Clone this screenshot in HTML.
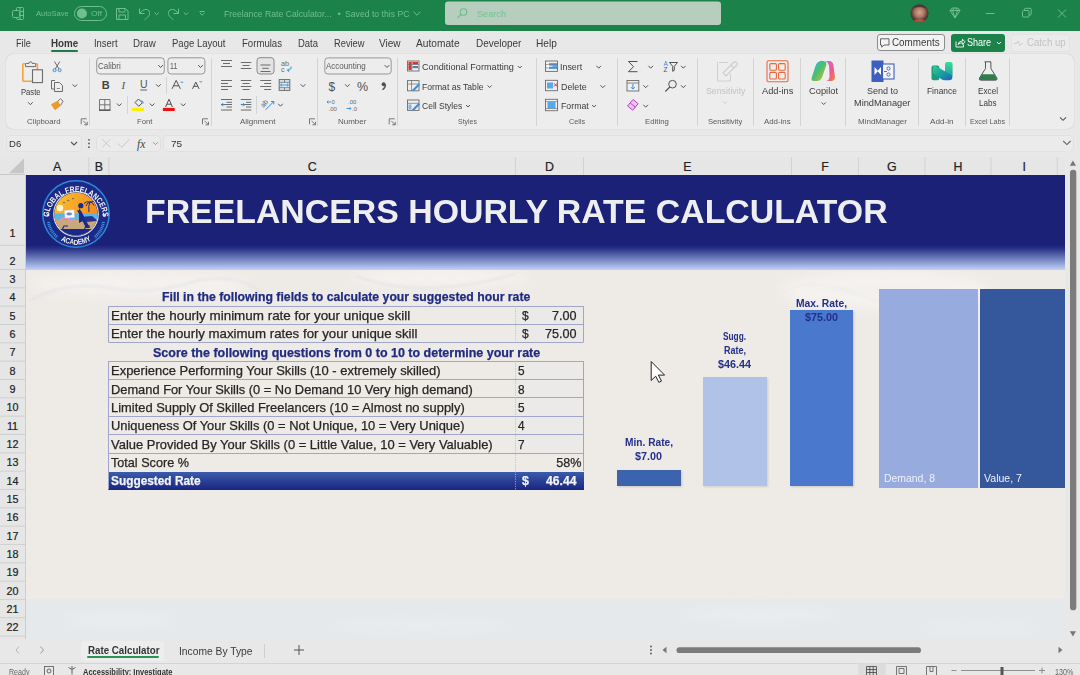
<!DOCTYPE html>
<html><head><meta charset="utf-8">
<style>
*{margin:0;padding:0;box-sizing:border-box}
html,body{width:1080px;height:675px;overflow:hidden;background:#e8e8e8;font-family:"Liberation Sans",sans-serif;position:relative}
.a{position:absolute}
.t{position:absolute;white-space:nowrap;line-height:1}
/* title bar */
#tb{left:0;top:0;width:1080px;height:31px;background:#1b8249}
/* tabs */
#tabs{left:0;top:31px;width:1080px;height:24px;background:#e8e8e8}
.tab{position:absolute;top:37px;font-size:11.5px;color:#3b3b3b}
/* ribbon */
#rib{left:6px;top:54px;width:1068px;height:75px;background:#ededed;border-radius:7px;box-shadow:0 0 1px rgba(0,0,0,.25)}
.sep{position:absolute;top:60px;width:1px;height:66px;background:#d6d6d6}
.gl{position:absolute;top:116px;font-size:9px;color:#555;white-space:nowrap;line-height:1}
.rt{position:absolute;font-size:10px;color:#333;white-space:nowrap;line-height:1}
/* formula bar */
.fb{position:absolute;background:#f0f0f0;border-radius:4px}
/* sheet */
#colh{left:0;top:151px;width:1065px;height:24px;background:#e6e6e6}
.ch{position:absolute;top:160px;font-size:12px;color:#222;line-height:1}
.cs{position:absolute;top:156px;width:1px;height:19px;background:#cfcfcf}
#rowh{left:0;top:175px;width:25px;height:464px;background:#e6e6e6;border-right:1px solid #c8c8c8}
.rh{position:absolute;left:0;width:25px;text-align:center;font-size:13px;color:#222;line-height:1}
#sheet{left:25px;top:175px;width:1040px;height:464px;background:#ece8e4;overflow:hidden}
</style></head><body>
<div id="tb" class="a"></div>
<div id="tabs" class="a"></div>
<!-- title bar content -->
<svg class="a" style="left:0;top:0" width="1080" height="31" viewBox="0 0 1080 31">
 <g fill="none" stroke="#6fbf8f" stroke-width="1">
  <!-- excel icon -->
  <rect x="16.5" y="7.5" width="7" height="12" rx="1"></rect>
  <line x1="16.5" y1="11.5" x2="23.5" y2="11.5"></line><line x1="16.5" y1="15.5" x2="23.5" y2="15.5"></line><line x1="20" y1="7.5" x2="20" y2="19.5"></line>
  <rect x="12.5" y="10.5" width="7" height="7" rx="1" fill="#1b8249"></rect>
  <!-- toggle -->
  <rect x="74.5" y="6.5" width="32" height="14" rx="7"></rect>
  <!-- save -->
  <path d="M116.5 8.5h9l2.5 2.5v8.5h-11.5z M119 8.5v3.5h6v-3.5 M119 19.5v-4.5h6.5v4.5"></path>
  <!-- undo -->
  <path d="M139.5 8.5v5h5 M140 13.5C142.5 8.5 149 8 149.5 12.5C150 15.5 147.5 17.5 144.5 19.8"></path>
  <path d="M154.5 12.5l2.2 2.2l2.2-2.2"></path>
  <!-- redo -->
  <path d="M178.5 8.5v5h-5 M178 13.5C175.5 8.5 169 8 168.5 12.5C168 15.5 170.5 17.5 173.5 19.8"></path>
  <path d="M183.8 12.5l2.2 2.2l2.2-2.2"></path>
  <!-- customize -->
  <path d="M199.5 11.5h5 M200 13l2.2 2.2l2.2-2.2"></path>
  <!-- title chevron -->
  <path d="M413.6 11.8l3.4 3.4l3.4-3.4"></path>
  <!-- search magnifier -->
  <circle cx="463.5" cy="12" r="3.3" stroke="#7ec79a"></circle><path d="M461 14.5l-3.3 3.3" stroke="#7ec79a"></path>
  <!-- diamond -->
  <path d="M950 10.5l2.2-2.5h5.6l2.2 2.5l-5 7.5z M950 10.5h10 M952.5 10.5l2.5 7.5l2.5-7.5 M954 8l-1.5 2.5 M956 8l1.5 2.5"></path>
  <!-- min -->
  <path d="M986 13.5h8.5"></path>
  <!-- restore -->
  <rect x="1022.5" y="10.5" width="6.5" height="6.5" rx="1"></rect><path d="M1024.5 10.5v-1.2a1 1 0 0 1 1-1h4.7a1 1 0 0 1 1 1v4.7a1 1 0 0 1-1 1h-1.2"></path>
  <!-- close -->
  <path d="M1058 9.5l8 8M1066 9.5l-8 8"></path>
 </g>
 <circle cx="81.9" cy="13.5" r="5" fill="#6fbf8f"></circle>
 <rect x="445" y="1.5" width="276" height="23.5" rx="3" fill="#b7cdbd"></rect>
 <circle cx="463.5" cy="12" r="3.3" fill="none" stroke="#6abd88" stroke-width="1.1"></circle><path d="M461 14.5l-3.3 3.3" stroke="#6abd88" stroke-width="1.1"></path>
 <defs><radialGradient id="av" cx=".5" cy=".45" r=".55"><stop offset="0" stop-color="#d9a48c"></stop><stop offset=".45" stop-color="#b07a66"></stop><stop offset=".8" stop-color="#5a4038"></stop><stop offset="1" stop-color="#3a2a28"></stop></radialGradient><clipPath id="avc"><circle cx="919.5" cy="13.3" r="9"></circle></clipPath></defs><circle cx="919.5" cy="13.3" r="9" fill="url(#av)"></circle><g clip-path="url(#avc)"><path d="M910 24q4-5 9.5-5t9.5 5z" fill="#c8463a"></path><path d="M911 9q3-6 9-6t8 7q-3-3-8-3t-9 2z" fill="#4a3a36"></path></g>
</svg>
<div class="t" style="left: 36px; top: 10.1px; font-size: 8px; color: rgb(111, 191, 143); --w: 32.75px; transform: scaleX(0.9437); transform-origin: 0px 0px;">AutoSave</div>
<div class="t" style="left: 90.9px; top: 10.1px; font-size: 8px; color: rgb(111, 191, 143); --w: 11px; transform: scaleX(1.0445); transform-origin: 0px 0px;">Off</div>
<div class="t" style="left: 224.3px; top: 9.9px; font-size: 9px; color: rgb(111, 191, 143); --w: 107.6px; transform: scaleX(0.9645); transform-origin: 0px 0px;">Freelance Rate Calculator...</div>
<div class="t" style="left:337.5px;top:9.9px;font-size:9px;color:#6fbf8f">•</div>
<div class="t" style="left: 344.5px; top: 9.9px; font-size: 9px; color: rgb(111, 191, 143); --w: 64.5px; transform: scaleX(0.962); transform-origin: 0px 0px;">Saved to this PC</div>
<div class="t" style="left: 476.5px; top: 9.4px; font-size: 9.5px; color: rgb(114, 194, 147); --w: 29px; transform: scaleX(0.9632); transform-origin: 0px 0px;">Search</div>
<div id="rib" class="a"></div>

<!--RIB-->
<div class="t" style="left: 15.8px; top: 38.41px; font-size: 10.5px; color: rgb(58, 58, 58); --w: 14.80px; transform: scaleX(0.8746); transform-origin: 0px 0px;">File</div>
<div class="t" style="left: 50.6px; top: 38.41px; font-size: 10.5px; color: rgb(58, 58, 58); --w: 27.20px; font-weight: bold; transform: scaleX(0.9319); transform-origin: 0px 0px;">Home</div>
<div class="t" style="left: 93.6px; top: 38.41px; font-size: 10.5px; color: rgb(58, 58, 58); --w: 23.60px; transform: scaleX(0.8985); transform-origin: 0px 0px;">Insert</div>
<div class="t" style="left: 133.3px; top: 38.41px; font-size: 10.5px; color: rgb(58, 58, 58); --w: 22.70px; transform: scaleX(0.9259); transform-origin: 0px 0px;">Draw</div>
<div class="t" style="left: 172px; top: 38.41px; font-size: 10.5px; color: rgb(58, 58, 58); --w: 53.50px; transform: scaleX(0.9073); transform-origin: 0px 0px;">Page Layout</div>
<div class="t" style="left: 242px; top: 38.41px; font-size: 10.5px; color: rgb(58, 58, 58); --w: 40.00px; transform: scaleX(0.914); transform-origin: 0px 0px;">Formulas</div>
<div class="t" style="left: 297.8px; top: 38.41px; font-size: 10.5px; color: rgb(58, 58, 58); --w: 20.00px; transform: scaleX(0.9014); transform-origin: 0px 0px;">Data</div>
<div class="t" style="left: 333.9px; top: 38.41px; font-size: 10.5px; color: rgb(58, 58, 58); --w: 30.50px; transform: scaleX(0.8857); transform-origin: 0px 0px;">Review</div>
<div class="t" style="left: 379.4px; top: 38.41px; font-size: 10.5px; color: rgb(58, 58, 58); --w: 21.60px; transform: scaleX(0.9567); transform-origin: 0px 0px;">View</div>
<div class="t" style="left: 416.4px; top: 38.41px; font-size: 10.5px; color: rgb(58, 58, 58); --w: 43.60px; transform: scaleX(0.9699); transform-origin: 0px 0px;">Automate</div>
<div class="t" style="left: 476px; top: 38.41px; font-size: 10.5px; color: rgb(58, 58, 58); --w: 45.40px; transform: scaleX(0.9483); transform-origin: 0px 0px;">Developer</div>
<div class="t" style="left: 536.4px; top: 38.41px; font-size: 10.5px; color: rgb(58, 58, 58); --w: 20.80px; transform: scaleX(0.9625); transform-origin: 0px 0px;">Help</div>
<div class="a" style="left:50.5px;top:50px;width:27.5px;height:2px;border-radius:1px;background:#1f7a46"></div>
<div class="a" style="left:876.5px;top:34.2px;width:68.5px;height:17.2px;border:1px solid #8c8c8c;border-radius:3px;background:#f3f3f3"></div>
<div class="t" style="left: 892.2px; top: 37.39px; font-size: 11px; color: rgb(58, 58, 58); --w: 47.60px; transform: scaleX(0.8949); transform-origin: 0px 0px;">Comments</div>
<div class="a" style="left:951.2px;top:33.7px;width:53.4px;height:17.9px;border-radius:3px;background:#1b8249"></div>
<div class="t" style="left: 967.3px; top: 37.39px; font-size: 11px; color: rgb(255, 255, 255); --w: 24.10px; transform: scaleX(0.8209); transform-origin: 0px 0px;">Share</div>
<div class="a" style="left:1010.7px;top:33.7px;width:59px;height:17.9px;border-radius:3px;background:#ebebeb;border:1px solid #e3e3e3"></div>
<div class="t" style="left: 1026.6px; top: 37.39px; font-size: 11px; color: rgb(195, 195, 195); --w: 38.70px; transform: scaleX(0.8789); transform-origin: 0px 0px;">Catch up</div>
<div class="t" style="left: 26.6px; top: 117.77px; font-size: 7.6px; color: rgb(90, 90, 90); --w: 33.50px; transform: scaleX(1.0303); transform-origin: 0px 0px;">Clipboard</div>
<div class="t" style="left: 136.7px; top: 117.77px; font-size: 7.6px; color: rgb(90, 90, 90); --w: 15.30px; transform: scaleX(1.0064); transform-origin: 0px 0px;">Font</div>
<div class="t" style="left: 240.4px; top: 117.77px; font-size: 7.6px; color: rgb(90, 90, 90); --w: 35.50px; transform: scaleX(1.0509); transform-origin: 0px 0px;">Alignment</div>
<div class="t" style="left: 337.6px; top: 117.77px; font-size: 7.6px; color: rgb(90, 90, 90); --w: 28.30px; transform: scaleX(1.0475); transform-origin: 0px 0px;">Number</div>
<div class="t" style="left: 457.8px; top: 117.77px; font-size: 7.6px; color: rgb(90, 90, 90); --w: 18.90px; transform: scaleX(0.9136); transform-origin: 0px 0px;">Styles</div>
<div class="t" style="left: 568.7px; top: 117.77px; font-size: 7.6px; color: rgb(90, 90, 90); --w: 16.10px; transform: scaleX(0.9532); transform-origin: 0px 0px;">Cells</div>
<div class="t" style="left: 645.2px; top: 117.77px; font-size: 7.6px; color: rgb(90, 90, 90); --w: 23.80px; transform: scaleX(1.0243); transform-origin: 0px 0px;">Editing</div>
<div class="t" style="left: 708.3px; top: 117.77px; font-size: 7.6px; color: rgb(90, 90, 90); --w: 34.30px; transform: scaleX(1.0033); transform-origin: 0px 0px;">Sensitivity</div>
<div class="t" style="left: 764.1px; top: 117.77px; font-size: 7.6px; color: rgb(90, 90, 90); --w: 26.60px; transform: scaleX(1.033); transform-origin: 0px 0px;">Add-ins</div>
<div class="t" style="left: 858px; top: 117.77px; font-size: 7.6px; color: rgb(90, 90, 90); --w: 49.00px; transform: scaleX(1.0552); transform-origin: 0px 0px;">MindManager</div>
<div class="t" style="left: 930.2px; top: 117.77px; font-size: 7.6px; color: rgb(90, 90, 90); --w: 23.50px; transform: scaleX(1.0705); transform-origin: 0px 0px;">Add-in</div>
<div class="t" style="left: 970px; top: 117.77px; font-size: 7.6px; color: rgb(90, 90, 90); --w: 35.00px; transform: scaleX(0.942); transform-origin: 0px 0px;">Excel Labs</div>
<div class="t" style="left: 20.8px; top: 87.55px; font-size: 8.8px; color: rgb(59, 59, 59); --w: 19.60px; transform: scaleX(0.8711); transform-origin: 0px 0px;">Paste</div>
<div class="t" style="left: 705.7px; top: 86.95px; font-size: 8.8px; color: rgb(194, 194, 194); --w: 39.50px; transform: scaleX(0.9972); transform-origin: 0px 0px;">Sensitivity</div>
<div class="t" style="left: 762px; top: 86.95px; font-size: 8.8px; color: rgb(59, 59, 59); --w: 31.30px; transform: scaleX(1.0493); transform-origin: 0px 0px;">Add-ins</div>
<div class="t" style="left: 809px; top: 87.35px; font-size: 8.8px; color: rgb(59, 59, 59); --w: 29.00px; transform: scaleX(1.0588); transform-origin: 0px 0px;">Copilot</div>
<div class="t" style="left: 867.2px; top: 86.95px; font-size: 8.8px; color: rgb(59, 59, 59); --w: 31.10px; transform: scaleX(1.0255); transform-origin: 0px 0px;">Send to</div>
<div class="t" style="left: 854.3px; top: 98.85px; font-size: 8.8px; color: rgb(59, 59, 59); --w: 56.40px; transform: scaleX(1.0484); transform-origin: 0px 0px;">MindManager</div>
<div class="t" style="left: 927.2px; top: 86.95px; font-size: 8.8px; color: rgb(59, 59, 59); --w: 29.80px; transform: scaleX(0.9522); transform-origin: 0px 0px;">Finance</div>
<div class="t" style="left: 977.5px; top: 87.25px; font-size: 8.8px; color: rgb(59, 59, 59); --w: 20.00px; transform: scaleX(0.9296); transform-origin: 0px 0px;">Excel</div>
<div class="t" style="left: 978.7px; top: 99.25px; font-size: 8.8px; color: rgb(59, 59, 59); --w: 17.60px; transform: scaleX(0.9225); transform-origin: 0px 0px;">Labs</div>
<div class="t" style="left: 97.9px; top: 62.66px; font-size: 8.2px; color: rgb(90, 90, 90); --w: 22.80px; transform: scaleX(0.982); transform-origin: 0px 0px;">Calibri</div>
<div class="t" style="left: 169.7px; top: 62.66px; font-size: 8.2px; color: rgb(90, 90, 90); --w: 7.30px; transform: scaleX(0.8588); transform-origin: 0px 0px;">11</div>
<div class="t" style="left: 326.3px; top: 62.66px; font-size: 8.2px; color: rgb(90, 90, 90); --w: 39.70px; transform: scaleX(0.9799); transform-origin: 0px 0px;">Accounting</div>
<div class="t" style="left: 422.4px; top: 63.18px; font-size: 9px; color: rgb(59, 59, 59); --w: 91.90px; transform: scaleX(1.0149); transform-origin: 0px 0px;">Conditional Formatting</div>
<div class="t" style="left: 422.4px; top: 82.58px; font-size: 9px; color: rgb(59, 59, 59); --w: 61.60px; transform: scaleX(0.9569); transform-origin: 0px 0px;">Format as Table</div>
<div class="t" style="left: 422.4px; top: 101.78px; font-size: 9px; color: rgb(59, 59, 59); --w: 40.20px; transform: scaleX(0.9455); transform-origin: 0px 0px;">Cell Styles</div>
<div class="t" style="left: 560.4px; top: 62.98px; font-size: 9px; color: rgb(59, 59, 59); --w: 22.20px; transform: scaleX(0.986); transform-origin: 0px 0px;">Insert</div>
<div class="t" style="left: 560.9px; top: 82.58px; font-size: 9px; color: rgb(59, 59, 59); --w: 25.60px; transform: scaleX(0.984); transform-origin: 0px 0px;">Delete</div>
<div class="t" style="left: 560.9px; top: 101.78px; font-size: 9px; color: rgb(59, 59, 59); --w: 27.80px; transform: scaleX(0.9749); transform-origin: 0px 0px;">Format</div>
<!--/RIB-->
<!--ICONS-->
<svg class="a" style="left:0;top:0" width="1080" height="135" viewBox="0 0 1080 135"><line x1="89.5" y1="58" x2="89.5" y2="126" stroke="#d4d4d4" stroke-width="1"></line><line x1="211.5" y1="58" x2="211.5" y2="126" stroke="#d4d4d4" stroke-width="1"></line><line x1="317.5" y1="58" x2="317.5" y2="126" stroke="#d4d4d4" stroke-width="1"></line><line x1="397.5" y1="58" x2="397.5" y2="126" stroke="#d4d4d4" stroke-width="1"></line><line x1="536.5" y1="58" x2="536.5" y2="126" stroke="#d4d4d4" stroke-width="1"></line><line x1="617.5" y1="58" x2="617.5" y2="126" stroke="#d4d4d4" stroke-width="1"></line><line x1="697.5" y1="58" x2="697.5" y2="126" stroke="#d4d4d4" stroke-width="1"></line><line x1="753.5" y1="58" x2="753.5" y2="126" stroke="#d4d4d4" stroke-width="1"></line><line x1="800.5" y1="58" x2="800.5" y2="126" stroke="#d4d4d4" stroke-width="1"></line><line x1="845.5" y1="58" x2="845.5" y2="126" stroke="#d4d4d4" stroke-width="1"></line><line x1="918.5" y1="58" x2="918.5" y2="126" stroke="#d4d4d4" stroke-width="1"></line><line x1="965.5" y1="58" x2="965.5" y2="126" stroke="#d4d4d4" stroke-width="1"></line><line x1="1009.5" y1="58" x2="1009.5" y2="126" stroke="#d4d4d4" stroke-width="1"></line><path d="M81.2 124.3v-5.5h5.5 M83.2 120.8l4 4 M87.2 121.8v3h-3" fill="none" stroke="#6b6b6b" stroke-width="0.9"></path><path d="M202.5 124.3v-5.5h5.5 M204.5 120.8l4 4 M208.5 121.8v3h-3" fill="none" stroke="#6b6b6b" stroke-width="0.9"></path><path d="M309.5 124.3v-5.5h5.5 M311.5 120.8l4 4 M315.5 121.8v3h-3" fill="none" stroke="#6b6b6b" stroke-width="0.9"></path><path d="M389.2 124.3v-5.5h5.5 M391.2 120.8l4 4 M395.2 121.8v3h-3" fill="none" stroke="#6b6b6b" stroke-width="0.9"></path><rect x="22.8" y="63.8" width="14.6" height="17.4" rx="1" fill="none" stroke="#f2a33a" stroke-width="1.6"></rect><path d="M25.6 66.6v-2.2a1 1 0 0 1 1-1h2.4a1.6 1.6 0 0 1 3.2 0h2.4a1 1 0 0 1 1 1v2.2z" fill="#ededed" stroke="#6b6b6b" stroke-width="1"></path><rect x="32.5" y="69.8" width="10" height="12.8" fill="#ededed" stroke="#6b6b6b" stroke-width="1.1"></rect><path d="M28.10 102.30l2.30 2.40l2.30 -2.40" fill="none" stroke="#555" stroke-width="1"></path><path d="M54.5 61.5l4.5 7.5 M59.8 61.5l-4.5 7.5" stroke="#6b6b6b" stroke-width="1" fill="none"></path><circle cx="54.6" cy="70.2" r="1.5" fill="none" stroke="#2f8fdc" stroke-width="1"></circle><circle cx="59.6" cy="70.2" r="1.5" fill="none" stroke="#2f8fdc" stroke-width="1"></circle><path d="M55 80.5h-3.5v8.5h2.5" fill="none" stroke="#6b6b6b" stroke-width="1"></path><path d="M54.5 82.5h5l3 3v6h-8z" fill="#ededed" stroke="#6b6b6b" stroke-width="1"></path><path d="M56.8 88.5h3" stroke="#6b6b6b" stroke-width="0.8"></path><path d="M72.60 84.40l2.30 2.40l2.30 -2.40" fill="none" stroke="#555" stroke-width="1"></path><path d="M51.5 104.5l6.5-3.5l2.5 4.5l-5.5 4.2z" fill="#f39a1e" stroke="#e07e10" stroke-width="0.6"></path><path d="M58 101l2.5-2.2l2.6 2.4l-2.4 4.2" fill="#ededed" stroke="#6b6b6b" stroke-width="0.9"></path><rect x="96.7" y="57.8" width="67.6" height="16.2" rx="3" fill="none" stroke="#8f8f8f" stroke-width="0.9"></rect><rect x="167.9" y="57.8" width="37" height="16.2" rx="3" fill="none" stroke="#8f8f8f" stroke-width="0.9"></rect><path d="M158.30 65.10l2.30 2.40l2.30 -2.40" fill="none" stroke="#555" stroke-width="1"></path><path d="M198.20 65.10l2.30 2.40l2.30 -2.40" fill="none" stroke="#555" stroke-width="1"></path><path d="M156.10 84.30l2.30 2.40l2.30 -2.40" fill="none" stroke="#555" stroke-width="1"></path><line x1="166.5" y1="77" x2="166.5" y2="94" stroke="#d4d4d4" stroke-width="1"></line><text x="101.8" y="88.9" font-family="Liberation Sans" font-weight="bold" font-size="11" fill="#444">B</text><text x="121.6" y="88.9" font-family="Liberation Serif" font-style="italic" font-size="11" fill="#555">I</text><text x="140" y="88.3" font-family="Liberation Sans" font-size="10.5" fill="#555">U</text><path d="M140.3 90h6.8" stroke="#555" stroke-width="0.9"></path><path d="M116.90 103.50l2.30 2.40l2.30 -2.40" fill="none" stroke="#555" stroke-width="1"></path><line x1="127.5" y1="96" x2="127.5" y2="114" stroke="#d4d4d4" stroke-width="1"></line><path d="M149.80 103.50l2.30 2.40l2.30 -2.40" fill="none" stroke="#555" stroke-width="1"></path><path d="M180.90 103.50l2.30 2.40l2.30 -2.40" fill="none" stroke="#555" stroke-width="1"></path><path d="M172 88.9l4.2-8.5l4.2 8.5 M173.6 85.8h5.2" fill="none" stroke="#505050" stroke-width="1"></path><path d="M180.6 83l1.3-1.4l1.3 1.4" fill="none" stroke="#2f8fdc" stroke-width="0.9"></path><path d="M192.5 88.9l3.3-6.8l3.3 6.8 M193.8 86.3h4" fill="none" stroke="#505050" stroke-width="1"></path><path d="M199.5 81l1.3 1.4l1.3-1.4" fill="none" stroke="#2f8fdc" stroke-width="0.9"></path><path d="M99.5 99.5h10.5v10.5h-10.5z M99.5 104.8h10.5 M104.8 99.5v10.5" fill="none" stroke="#6b6b6b" stroke-width="0.9"></path><path d="M99 110.3h11.5" stroke="#555" stroke-width="1.3"></path><path d="M135 102.5l3.5-3.5l3.8 3.8l-3.5 3.5z" fill="none" stroke="#505050" stroke-width="1"></path><path d="M141.5 100.5q1.8 0.6 1.6 3" fill="none" stroke="#2f8fdc" stroke-width="1"></path><rect x="131.8" y="107.9" width="12.2" height="3.1" fill="#ffee00"></rect><path d="M165.6 107l3.4-7.8l3.4 7.8 M166.8 104.2h4.4" fill="none" stroke="#505050" stroke-width="1"></path><rect x="162.9" y="107.9" width="11.8" height="3.1" fill="#ee1111"></rect><path d="M221.00 60.5h11" stroke="#6b6b6b" stroke-width="1"></path><path d="M223.00 63.5h7" stroke="#6b6b6b" stroke-width="1"></path><path d="M221.00 66.5h11" stroke="#6b6b6b" stroke-width="1"></path><path d="M240.80 62.5h10.5" stroke="#6b6b6b" stroke-width="1"></path><path d="M242.55 65.5h7" stroke="#6b6b6b" stroke-width="1"></path><path d="M240.80 68.5h10.5" stroke="#6b6b6b" stroke-width="1"></path><rect x="257" y="57.7" width="17" height="16.3" rx="3" fill="#e4e4e4" stroke="#8a8a8a" stroke-width="1"></rect><path d="M260.50 65h10" stroke="#6b6b6b" stroke-width="1"></path><path d="M262.25 68.3h6.5" stroke="#6b6b6b" stroke-width="1"></path><path d="M260.50 71.5h10" stroke="#6b6b6b" stroke-width="1"></path><text x="281" y="66" font-family="Liberation Sans" font-size="7.2" fill="#6b6b6b">ab</text><text x="281" y="72" font-family="Liberation Sans" font-size="7.2" fill="#6b6b6b">c</text><path d="M291 66.5q0.8 3.5-3.5 3.8 M289 68.6l-1.6 1.7l1.7 1.5" fill="none" stroke="#2f8fdc" stroke-width="1"></path><path d="M221.00 80.5h11" stroke="#6b6b6b" stroke-width="1"></path><path d="M221.00 83.5h7" stroke="#6b6b6b" stroke-width="1"></path><path d="M221.00 86.5h11" stroke="#6b6b6b" stroke-width="1"></path><path d="M221.00 89.5h7" stroke="#6b6b6b" stroke-width="1"></path><path d="M240.80 80.5h10.5" stroke="#6b6b6b" stroke-width="1"></path><path d="M242.55 83.5h7" stroke="#6b6b6b" stroke-width="1"></path><path d="M240.80 86.5h10.5" stroke="#6b6b6b" stroke-width="1"></path><path d="M242.55 89.5h7" stroke="#6b6b6b" stroke-width="1"></path><path d="M260.20 80.5h11" stroke="#6b6b6b" stroke-width="1"></path><path d="M264.20 83.5h7" stroke="#6b6b6b" stroke-width="1"></path><path d="M260.20 86.5h11" stroke="#6b6b6b" stroke-width="1"></path><path d="M264.20 89.5h7" stroke="#6b6b6b" stroke-width="1"></path><rect x="279.2" y="79.6" width="10.6" height="10.8" fill="#dcebf8" stroke="#6b6b6b" stroke-width="1"></rect><path d="M279.2 82.3h10.6 M279.2 87.7h10.6 M284.5 79.6v2.7 M284.5 87.7v2.7" stroke="#6b6b6b" stroke-width="0.8"></path><path d="M280.5 85h8 M282 83.6l-1.5 1.4l1.5 1.4 M287 83.6l1.5 1.4l-1.5 1.4" fill="none" stroke="#2f8fdc" stroke-width="0.9"></path><path d="M300.70 84.30l2.30 2.40l2.30 -2.40" fill="none" stroke="#555" stroke-width="1"></path><path d="M221.00 99.5h11" stroke="#6b6b6b" stroke-width="1"></path><path d="M221.00 104.5h11" stroke="#6b6b6b" stroke-width="1"></path><path d="M221.00 110h11" stroke="#6b6b6b" stroke-width="1"></path><path d="M226.5 102.3h5.5 M226.5 107h5.5" stroke="#6b6b6b" stroke-width="1"></path><path d="M221.5 104.7h3.5 M223 103.2l-1.5 1.5l1.5 1.5" stroke="#2f8fdc" fill="none" stroke-width="1"></path><path d="M240.80 99.5h10.5" stroke="#6b6b6b" stroke-width="1"></path><path d="M240.80 104.5h10.5" stroke="#6b6b6b" stroke-width="1"></path><path d="M240.80 110h10.5" stroke="#6b6b6b" stroke-width="1"></path><path d="M246 102.3h5.3 M246 107h5.3" stroke="#6b6b6b" stroke-width="1"></path><path d="M241 104.7h3.5 M243.2 103.2l1.5 1.5l-1.5 1.5" stroke="#2f8fdc" fill="none" stroke-width="1"></path><line x1="256.5" y1="96" x2="256.5" y2="113.8" stroke="#d4d4d4" stroke-width="1"></line><text x="0" y="0" font-family="Liberation Sans" font-size="7" fill="#6b6b6b" transform="translate(263.5 108) rotate(-50)">ab</text><path d="M265.5 109.8l8.3-8.3 M271 101.5h2.8v2.8" fill="none" stroke="#2f8fdc" stroke-width="1"></path><path d="M278.20 103.80l2.30 2.40l2.30 -2.40" fill="none" stroke="#555" stroke-width="1"></path><rect x="324.8" y="57.9" width="66.4" height="16.1" rx="3" fill="none" stroke="#8f8f8f" stroke-width="0.9"></rect><path d="M384.70 65.10l2.30 2.40l2.30 -2.40" fill="none" stroke="#555" stroke-width="1"></path><text x="328.5" y="90.5" font-family="Liberation Sans" font-size="12" fill="#505050">$</text><path d="M345.10 84.30l2.30 2.40l2.30 -2.40" fill="none" stroke="#555" stroke-width="1"></path><text x="357" y="90.8" font-family="Liberation Sans" font-size="12.5" fill="#505050">%</text><circle cx="383.6" cy="84.2" r="2" fill="#505050"></circle><path d="M385.4 84.5q0.3 3.2-3 5.3" fill="none" stroke="#505050" stroke-width="1.3"></path><text x="331.5" y="103.8" font-family="Liberation Sans" font-size="6" fill="#6b6b6b">0</text><text x="328.5" y="110.5" font-family="Liberation Sans" font-size="6" fill="#6b6b6b">.00</text><path d="M327 102h4 M328.3 100.7l-1.3 1.3l1.3 1.3" stroke="#2f8fdc" fill="none" stroke-width="0.9"></path><text x="348" y="103.8" font-family="Liberation Sans" font-size="6" fill="#6b6b6b">.00</text><text x="352" y="110.5" font-family="Liberation Sans" font-size="6" fill="#6b6b6b">.0</text><path d="M346.5 108.5h4.5 M349.7 107.2l1.3 1.3l-1.3 1.3" stroke="#2f8fdc" fill="none" stroke-width="0.9"></path><rect x="407.5" y="61" width="11.5" height="10" fill="#efefef" stroke="#6b6b6b" stroke-width="0.9"></rect><rect x="408.5" y="62" width="3" height="8" fill="#e03030"></rect><rect x="412.5" y="62" width="5.5" height="2.5" fill="#e03030"></rect><rect x="412.5" y="66" width="5.5" height="1.8" fill="#3a7fd0"></rect><path d="M407.5 64.5h11.5 M407.5 67.8h11.5 M411.8 61v10" stroke="#6b6b6b" stroke-width="0.6"></path><path d="M517.80 66.00l2.00 2.00l2.00 -2.00" fill="none" stroke="#555" stroke-width="1"></path><rect x="407.5" y="80.6" width="11.5" height="10.2" fill="#efefef" stroke="#6b6b6b" stroke-width="0.9"></rect><path d="M407.5 84h11.5 M411.5 80.6v10.2" stroke="#6b6b6b" stroke-width="0.7"></path><path d="M412 90l6.5-6.5l1.5 1.5l-6.5 6.5z" fill="#3a8fe0"></path><path d="M487.60 85.50l2.00 2.00l2.00 -2.00" fill="none" stroke="#555" stroke-width="1"></path><rect x="407.5" y="100" width="11.5" height="10.4" fill="#efefef" stroke="#6b6b6b" stroke-width="0.9"></rect><path d="M407.5 103.3h11.5" stroke="#6b6b6b" stroke-width="0.7"></path><path d="M412 109.5l6.5-6.5l1.5 1.5l-6.5 6.5z" fill="#3a8fe0"></path><rect x="408.5" y="104.5" width="3" height="5" fill="#3a8fe0" opacity=".6"></rect><path d="M466.00 105.00l2.00 2.00l2.00 -2.00" fill="none" stroke="#555" stroke-width="1"></path><rect x="545.5" y="61" width="12" height="10.4" fill="#efefef" stroke="#6b6b6b" stroke-width="0.9"></rect><rect x="549" y="63" width="8" height="6" fill="#5aa8ea"></rect><path d="M545.5 64.5h12 M545.5 67.8h12" stroke="#6b6b6b" stroke-width="0.6"></path><path d="M547.5 66.2h5 M549 64.8l-1.5 1.4l1.5 1.4" stroke="#fff" fill="none" stroke-width="0.9"></path><path d="M596.40 65.80l2.30 2.40l2.30 -2.40" fill="none" stroke="#555" stroke-width="1"></path><rect x="545.5" y="80.3" width="12" height="10.4" fill="#efefef" stroke="#6b6b6b" stroke-width="0.9"></rect><rect x="547" y="82.5" width="6" height="6" fill="#5aa8ea"></rect><path d="M554 83.3l3.2 3.2 M557.2 83.3l-3.2 3.2" stroke="#e03030" stroke-width="1"></path><path d="M600.50 85.30l2.30 2.40l2.30 -2.40" fill="none" stroke="#555" stroke-width="1"></path><rect x="545.5" y="99.3" width="12" height="11.4" fill="#efefef" stroke="#6b6b6b" stroke-width="0.9"></rect><rect x="547.5" y="102" width="8" height="6.5" fill="#5aa8ea"></rect><path d="M545.5 101.5h12 M545.5 108.5h12" stroke="#6b6b6b" stroke-width="0.6"></path><path d="M592.10 105.00l2.00 2.00l2.00 -2.00" fill="none" stroke="#555" stroke-width="1"></path><path d="M637.5 61.5h-9l5 5.2l-5 5h9" fill="none" stroke="#505050" stroke-width="1"></path><path d="M648.40 65.80l2.30 2.40l2.30 -2.40" fill="none" stroke="#555" stroke-width="1"></path><text x="663.5" y="66" font-family="Liberation Sans" font-size="6.5" fill="#2f8fdc">A</text><text x="663.5" y="72" font-family="Liberation Sans" font-size="6.5" fill="#505050">Z</text><path d="M669.5 62.5h8l-3.2 3.8v4l-1.6 1v-5z" fill="none" stroke="#505050" stroke-width="1"></path><path d="M681.00 65.80l2.30 2.40l2.30 -2.40" fill="none" stroke="#555" stroke-width="1"></path><rect x="627" y="80.5" width="11.8" height="10.5" fill="#efefef" stroke="#6b6b6b" stroke-width="0.9"></rect><path d="M627 83h11.8" stroke="#6b6b6b" stroke-width="0.8"></path><path d="M632.9 84v5 M631 87.2l1.9 1.9l1.9-1.9" fill="none" stroke="#2f8fdc" stroke-width="1"></path><path d="M643.40 85.30l2.30 2.40l2.30 -2.40" fill="none" stroke="#555" stroke-width="1"></path><circle cx="672.5" cy="84.2" r="3.8" fill="none" stroke="#505050" stroke-width="1"></circle><path d="M669.8 87l-4.5 4.5" stroke="#505050" stroke-width="1.1"></path><path d="M681.00 85.30l2.30 2.40l2.30 -2.40" fill="none" stroke="#555" stroke-width="1"></path><path d="M627.5 106l5.5-6.5l5.2 4.2l-5.5 6.5z" fill="#e9c6ee" stroke="#c040c8" stroke-width="1"></path><path d="M630.2 103l5.2 4.2" stroke="#c040c8" stroke-width="1"></path><path d="M643.40 104.80l2.30 2.40l2.30 -2.40" fill="none" stroke="#555" stroke-width="1"></path><path d="M719 62.5h8.5l-1 0 M717.5 62v19h13v-7" fill="none" stroke="#d0d0d0" stroke-width="1"></path><path d="M723 73l8-8l3 3l-8 8z M731 65l2.5-2.5a1.5 1.5 0 0 1 3 3l-2.5 2.5" fill="none" stroke="#cdcdcd" stroke-width="1.1"></path><path d="M723.00 101.40l2.00 2.00l2.00 -2.00" fill="none" stroke="#cfcfcf" stroke-width="1"></path><rect x="767" y="60.8" width="21" height="21" rx="1.5" fill="none" stroke="#e8693f" stroke-width="1.1"></rect><rect x="769.8" y="63.6" width="6.6" height="6.6" rx="1" fill="none" stroke="#e8693f" stroke-width="1.1"></rect><rect x="778.6" y="63.6" width="6.6" height="6.6" rx="1" fill="none" stroke="#e8693f" stroke-width="1.1"></rect><rect x="769.8" y="72.4" width="6.6" height="6.6" rx="1" fill="none" stroke="#e8693f" stroke-width="1.1"></rect><rect x="778.6" y="72.4" width="6.6" height="6.6" rx="1" fill="none" stroke="#e8693f" stroke-width="1.1"></rect><defs><linearGradient id="cp1" x1="0" y1="0" x2="1" y2="1"><stop offset="0" stop-color="#2fb3f5"></stop><stop offset=".5" stop-color="#4cc06a"></stop><stop offset="1" stop-color="#f0b83a"></stop></linearGradient><linearGradient id="cp2" x1="0" y1="0" x2="1" y2="1"><stop offset="0" stop-color="#c26bf0"></stop><stop offset=".6" stop-color="#ef5a8a"></stop><stop offset="1" stop-color="#f08a3a"></stop></linearGradient><linearGradient id="fin" x1="0" y1="0" x2="1" y2="1"><stop offset="0" stop-color="#1ec07a"></stop><stop offset=".6" stop-color="#1a9fb0"></stop><stop offset="1" stop-color="#2a5ad0"></stop></linearGradient></defs><path d="M820.5 61q2-0.5 4.5 0.5q2 1 1.2 4l-4 11.5q-1.2 3.5-4.5 4h-4q-2.8-0.2-2-3.2l3.5-11q1.5-5 5.3-5.8z" fill="url(#cp1)"></path><path d="M825 61h4.5q3 0.3 3.8 3.3l1.6 12.2q0.4 3.8-3 4.5h-5.5q2.8-0.8 3.2-4l-0.5-10.5q-0.6-4.5-4.1-5.5z" fill="url(#cp2)"></path><path d="M821.70 102.50l2.00 2.00l2.00 -2.00" fill="none" stroke="#555" stroke-width="1"></path><rect x="871.5" y="60.5" width="12" height="21.5" fill="#3f5fbf"></rect><rect x="882.5" y="64" width="11.5" height="15" fill="#f4f4f4" stroke="#3f5fbf" stroke-width="1.1"></rect><path d="M874.5 67v8l3.5-4z M881 67v8l-3.5-4z" fill="#fff"></path><path d="M878.2 71h-0.4" stroke="#fff"></path><circle cx="888.5" cy="68.5" r="1.6" fill="none" stroke="#3f5fbf" stroke-width="0.9"></circle><circle cx="888.5" cy="74.5" r="1.6" fill="none" stroke="#3f5fbf" stroke-width="0.9"></circle><path d="M884 71.5h3" stroke="#3f5fbf" stroke-width="0.9"></path><defs><linearGradient id="fn1" x1="0" y1="0" x2="0" y2="1"><stop offset="0" stop-color="#3fdc9a"></stop><stop offset="1" stop-color="#1a9aa8"></stop></linearGradient><linearGradient id="fn2" x1="0" y1="0" x2="1" y2="1"><stop offset="0" stop-color="#2fcf8a"></stop><stop offset=".5" stop-color="#1aa0a0"></stop><stop offset="1" stop-color="#1f5fc0"></stop></linearGradient></defs><rect x="945" y="62" width="7.6" height="15.5" rx="2" fill="url(#fn1)"></rect><rect x="931.5" y="65.5" width="7.8" height="14.8" rx="2" fill="#1c9c78"></rect><path d="M933 66.5q0.5-1.5 2.2-0.8l11.5 6.5q5.5 2.8 5.8 5.2q-0.3 2.5-3 2.8h-5q-1.5 0-3-1l-8.5-6z" fill="url(#fn2)"></path><path d="M984.5 61.8h6.5 M985.5 62v6.5l-6 9.5q-0.8 2 1.2 2.2h15q2-0.2 1.2-2.2l-6-9.5v-6.5" fill="none" stroke="#555" stroke-width="1"></path><path d="M981.8 74.2h12.4l2.5 4.2q0.4 1.5-1 1.5h-15.4q-1.4 0-1-1.5z" fill="#2e7d4a"></path><path d="M1060.00 117.30l3.00 3.00l3.00 -3.00" fill="none" stroke="#555" stroke-width="1.1"></path><path d="M880.5 38.8h8.5v6.2h-5l-2.3 2.2v-2.2h-1.2z" fill="none" stroke="#555" stroke-width="0.9"></path><path d="M956 41.5v5.5h7.5v-2.5 M958 44.5q0.5-3.5 4.5-3.5v-1.8l2.5 2.6l-2.5 2.6v-1.6q-2.8-0.2-4.5 1.7z" fill="none" stroke="#fff" stroke-width="0.9"></path><path d="M996.90 42.00l2.00 2.00l2.00 -2.00" fill="none" stroke="#fff" stroke-width="1"></path><path d="M1014 43.5h2.5l1.5-2.5l2 4.5l1.5-2h1.5" fill="none" stroke="#c8c8c8" stroke-width="0.9"></path></svg>
<!--/ICONS-->
<!--SHEET-->
<div class="a" style="left:6.90px;top:135.70px;width:74.00px;height:15.20px;background:#ebebeb;border-radius:4px;box-shadow:0 0 0 1px #e0e0e0"></div>
<div class="t" style="left: 8.7px; top: 138.52px; font-size: 9.9px; color: rgb(51, 51, 51); --w: 12.20px; transform: scaleX(0.9663); transform-origin: 0px 0px;">D6</div>
<div class="a" style="left:97.20px;top:135.70px;width:62.40px;height:15.20px;background:#ebebeb;border-radius:4px;box-shadow:0 0 0 1px #e0e0e0"></div>
<div class="a" style="left:163.90px;top:135.60px;width:909.10px;height:15.80px;background:#ebebeb;border-radius:4px;box-shadow:0 0 0 1px #e0e0e0"></div>
<div class="t" style="left: 171.3px; top: 138.52px; font-size: 9.9px; color: rgb(51, 51, 51); --w: 11.10px; transform: scaleX(1.0105); transform-origin: 0px 0px;">75</div>
<svg class="a" style="left:0;top:130px" width="1080" height="22" viewBox="0 130 1080 22"><path d="M71.00 142.00l3.00 3.00l3.00 -3.00" fill="none" stroke="#555" stroke-width="1.1"></path><circle cx="89" cy="139.8" r="0.9" fill="#555"></circle><circle cx="89" cy="143.5" r="0.9" fill="#555"></circle><circle cx="89" cy="147.2" r="0.9" fill="#555"></circle><path d="M102.2 139.2l8.2 8.2M110.4 139.2l-8.2 8.2" stroke="#c4c4c4" stroke-width="0.9"></path><path d="M118 143.5l3.8 3.8l7.6-8" fill="none" stroke="#c4c4c4" stroke-width="0.9"></path><text x="137" y="147.5" font-family="Liberation Serif" font-style="italic" font-size="11.5" fill="#444">fx</text><path d="M153.25 142.35l2.25 2.30l2.25 -2.30" fill="none" stroke="#888" stroke-width="0.9"></path><path d="M1063.20 141.00l3.70 3.60l3.70 -3.60" fill="none" stroke="#666" stroke-width="1.1"></path></svg>
<div class="a" style="left:0.00px;top:157.00px;width:1065.00px;height:18.00px;background:#e6e6e6;"></div>
<svg class="a" style="left:0;top:155px" width="1080" height="22" viewBox="0 155 1080 22"><path d="M9 173.3L24 158.4V173.3z" fill="#c6c6c6"></path><line x1="88.9" y1="157" x2="88.9" y2="175" stroke="#d2d2d2" stroke-width="1"></line><line x1="108.9" y1="157" x2="108.9" y2="175" stroke="#d2d2d2" stroke-width="1"></line><line x1="515.4" y1="157" x2="515.4" y2="175" stroke="#d2d2d2" stroke-width="1"></line><line x1="583.5" y1="157" x2="583.5" y2="175" stroke="#d2d2d2" stroke-width="1"></line><line x1="791.5" y1="157" x2="791.5" y2="175" stroke="#d2d2d2" stroke-width="1"></line><line x1="858.5" y1="157" x2="858.5" y2="175" stroke="#d2d2d2" stroke-width="1"></line><line x1="925" y1="157" x2="925" y2="175" stroke="#d2d2d2" stroke-width="1"></line><line x1="991" y1="157" x2="991" y2="175" stroke="#d2d2d2" stroke-width="1"></line><line x1="1057.3" y1="157" x2="1057.3" y2="175" stroke="#d2d2d2" stroke-width="1"></line><line x1="0" y1="174.5" x2="25" y2="174.5" stroke="#c8c8c8"></line></svg>
<div class="t" style="left:25.50px;width:63.40px;text-align:center;top:160.50px;font-size:12.4px;color:#222;-webkit-text-stroke:0.2px">A</div>
<div class="t" style="left:88.90px;width:20.00px;text-align:center;top:160.50px;font-size:12.4px;color:#222;-webkit-text-stroke:0.2px">B</div>
<div class="t" style="left:108.90px;width:406.50px;text-align:center;top:160.50px;font-size:12.4px;color:#222;-webkit-text-stroke:0.2px">C</div>
<div class="t" style="left:515.40px;width:68.10px;text-align:center;top:160.50px;font-size:12.4px;color:#222;-webkit-text-stroke:0.2px">D</div>
<div class="t" style="left:583.50px;width:208.00px;text-align:center;top:160.50px;font-size:12.4px;color:#222;-webkit-text-stroke:0.2px">E</div>
<div class="t" style="left:791.50px;width:67.00px;text-align:center;top:160.50px;font-size:12.4px;color:#222;-webkit-text-stroke:0.2px">F</div>
<div class="t" style="left:858.50px;width:66.50px;text-align:center;top:160.50px;font-size:12.4px;color:#222;-webkit-text-stroke:0.2px">G</div>
<div class="t" style="left:925.00px;width:66.00px;text-align:center;top:160.50px;font-size:12.4px;color:#222;-webkit-text-stroke:0.2px">H</div>
<div class="t" style="left:991.00px;width:66.30px;text-align:center;top:160.50px;font-size:12.4px;color:#222;-webkit-text-stroke:0.2px">I</div>
<div class="a" style="left:0.00px;top:175.00px;width:25.50px;height:464.00px;background:#e6e6e6;border-right:1px solid #cdcdcd"></div>
<svg class="a" style="left:0;top:175px" width="26" height="464" viewBox="0 175 26 464"><line x1="0" y1="245.30" x2="25" y2="245.30" stroke="#d0d0d0" stroke-width="1"></line><line x1="0" y1="269.50" x2="25" y2="269.50" stroke="#d0d0d0" stroke-width="1"></line><line x1="0" y1="287.83" x2="25" y2="287.83" stroke="#d0d0d0" stroke-width="1"></line><line x1="0" y1="306.16" x2="25" y2="306.16" stroke="#d0d0d0" stroke-width="1"></line><line x1="0" y1="324.49" x2="25" y2="324.49" stroke="#d0d0d0" stroke-width="1"></line><line x1="0" y1="342.82" x2="25" y2="342.82" stroke="#d0d0d0" stroke-width="1"></line><line x1="0" y1="361.15" x2="25" y2="361.15" stroke="#d0d0d0" stroke-width="1"></line><line x1="0" y1="379.48" x2="25" y2="379.48" stroke="#d0d0d0" stroke-width="1"></line><line x1="0" y1="397.81" x2="25" y2="397.81" stroke="#d0d0d0" stroke-width="1"></line><line x1="0" y1="416.14" x2="25" y2="416.14" stroke="#d0d0d0" stroke-width="1"></line><line x1="0" y1="434.47" x2="25" y2="434.47" stroke="#d0d0d0" stroke-width="1"></line><line x1="0" y1="452.80" x2="25" y2="452.80" stroke="#d0d0d0" stroke-width="1"></line><line x1="0" y1="471.13" x2="25" y2="471.13" stroke="#d0d0d0" stroke-width="1"></line><line x1="0" y1="489.46" x2="25" y2="489.46" stroke="#d0d0d0" stroke-width="1"></line><line x1="0" y1="507.79" x2="25" y2="507.79" stroke="#d0d0d0" stroke-width="1"></line><line x1="0" y1="526.12" x2="25" y2="526.12" stroke="#d0d0d0" stroke-width="1"></line><line x1="0" y1="544.45" x2="25" y2="544.45" stroke="#d0d0d0" stroke-width="1"></line><line x1="0" y1="562.78" x2="25" y2="562.78" stroke="#d0d0d0" stroke-width="1"></line><line x1="0" y1="581.11" x2="25" y2="581.11" stroke="#d0d0d0" stroke-width="1"></line><line x1="0" y1="599.44" x2="25" y2="599.44" stroke="#d0d0d0" stroke-width="1"></line><line x1="0" y1="617.77" x2="25" y2="617.77" stroke="#d0d0d0" stroke-width="1"></line><line x1="0" y1="636.10" x2="25" y2="636.10" stroke="#d0d0d0" stroke-width="1"></line></svg>
<div class="t" style="left:0;width:25px;text-align:center;top:227.66px;font-size:10.8px;color:#222;-webkit-text-stroke:0.2px">1</div>
<div class="t" style="left:0;width:25px;text-align:center;top:255.76px;font-size:10.8px;color:#222;-webkit-text-stroke:0.2px">2</div>
<div class="t" style="left:0;width:25px;text-align:center;top:274.09px;font-size:10.8px;color:#222;-webkit-text-stroke:0.2px">3</div>
<div class="t" style="left:0;width:25px;text-align:center;top:292.42px;font-size:10.8px;color:#222;-webkit-text-stroke:0.2px">4</div>
<div class="t" style="left:0;width:25px;text-align:center;top:310.75px;font-size:10.8px;color:#222;-webkit-text-stroke:0.2px">5</div>
<div class="t" style="left:0;width:25px;text-align:center;top:329.08px;font-size:10.8px;color:#222;-webkit-text-stroke:0.2px">6</div>
<div class="t" style="left:0;width:25px;text-align:center;top:347.41px;font-size:10.8px;color:#222;-webkit-text-stroke:0.2px">7</div>
<div class="t" style="left:0;width:25px;text-align:center;top:365.74px;font-size:10.8px;color:#222;-webkit-text-stroke:0.2px">8</div>
<div class="t" style="left:0;width:25px;text-align:center;top:384.07px;font-size:10.8px;color:#222;-webkit-text-stroke:0.2px">9</div>
<div class="t" style="left:0;width:25px;text-align:center;top:402.40px;font-size:10.8px;color:#222;-webkit-text-stroke:0.2px">10</div>
<div class="t" style="left:0;width:25px;text-align:center;top:420.73px;font-size:10.8px;color:#222;-webkit-text-stroke:0.2px">11</div>
<div class="t" style="left:0;width:25px;text-align:center;top:439.06px;font-size:10.8px;color:#222;-webkit-text-stroke:0.2px">12</div>
<div class="t" style="left:0;width:25px;text-align:center;top:457.39px;font-size:10.8px;color:#222;-webkit-text-stroke:0.2px">13</div>
<div class="t" style="left:0;width:25px;text-align:center;top:475.72px;font-size:10.8px;color:#222;-webkit-text-stroke:0.2px">14</div>
<div class="t" style="left:0;width:25px;text-align:center;top:494.05px;font-size:10.8px;color:#222;-webkit-text-stroke:0.2px">15</div>
<div class="t" style="left:0;width:25px;text-align:center;top:512.38px;font-size:10.8px;color:#222;-webkit-text-stroke:0.2px">16</div>
<div class="t" style="left:0;width:25px;text-align:center;top:530.71px;font-size:10.8px;color:#222;-webkit-text-stroke:0.2px">17</div>
<div class="t" style="left:0;width:25px;text-align:center;top:549.04px;font-size:10.8px;color:#222;-webkit-text-stroke:0.2px">18</div>
<div class="t" style="left:0;width:25px;text-align:center;top:567.37px;font-size:10.8px;color:#222;-webkit-text-stroke:0.2px">19</div>
<div class="t" style="left:0;width:25px;text-align:center;top:585.70px;font-size:10.8px;color:#222;-webkit-text-stroke:0.2px">20</div>
<div class="t" style="left:0;width:25px;text-align:center;top:604.03px;font-size:10.8px;color:#222;-webkit-text-stroke:0.2px">21</div>
<div class="t" style="left:0;width:25px;text-align:center;top:622.36px;font-size:10.8px;color:#222;-webkit-text-stroke:0.2px">22</div>
<div class="a" id="sheet" style="left:25.5px;top:175px;width:1039.5px;height:464px;background:#eeeae6;overflow:hidden"><div class="a" style="left:0;top:423.5px;width:1039.5px;height:40.5px;background:#e5e9ec"></div><svg class="a" style="left:-25.5px;top:-175px" width="1080" height="675" viewBox="0 0 1080 675"><defs><filter id="bl" x="-50%" y="-50%" width="200%" height="200%"><feGaussianBlur stdDeviation="6"></feGaussianBlur></filter><filter id="bl2"><feGaussianBlur stdDeviation="1.2"></feGaussianBlur></filter></defs><g filter="url(#bl)" fill="#ffffff" opacity=".35"><ellipse cx="140" cy="284" rx="110" ry="12"></ellipse><ellipse cx="440" cy="278" rx="90" ry="10"></ellipse><ellipse cx="885" cy="290" rx="105" ry="20"></ellipse></g><g filter="url(#bl2)" fill="none" stroke="#d6dbe6" stroke-width="1.4" opacity=".55"><path d="M30 300q40-20 80-12t90-8q40-6 60 12"></path><path d="M355 276q40 14 80 12t80-14"></path><path d="M783 293q20-14 50-6t60 20q30 8 60 2" opacity=".4"></path></g><g fill="#ffffff" opacity=".15" filter="url(#bl)"><ellipse cx="120" cy="620" rx="60" ry="8"></ellipse><ellipse cx="420" cy="625" rx="90" ry="7"></ellipse><ellipse cx="760" cy="615" rx="80" ry="9"></ellipse><ellipse cx="980" cy="628" rx="60" ry="6"></ellipse></g></svg></div>
<div class="a" style="left:25.50px;top:175.00px;width:1039.50px;height:70.30px;background:#1a2176;"></div>
<div class="a" style="left:25.50px;top:245.30px;width:1039.50px;height:24.40px;background:linear-gradient(#1a2176 0%,#2a3388 15%,#6676b6 50%,#b8caf0 95%,#c4d2f0 100%);"></div>
<div class="t" style="left: 144.6px; top: 195.65px; font-size: 32.9px; color: rgb(238, 238, 238); --w: 742.60px; font-weight: bold; transform: scaleX(1.0288); transform-origin: 0px 0px;">FREELANCERS HOURLY RATE CALCULATOR</div>
<!--/SHEET-->
<!--CONTENT-->
<div class="a" style="left:515.50px;top:306.50px;width:68.00px;height:18.00px;background:#ebeae9;"></div>
<div class="a" style="left:515.50px;top:324.50px;width:68.00px;height:18.00px;background:#ebeae9;"></div>
<div class="a" style="left:515.50px;top:361.50px;width:68.00px;height:18.00px;background:#ebeae9;"></div>
<div class="a" style="left:515.50px;top:379.50px;width:68.00px;height:18.50px;background:#ebeae9;"></div>
<div class="a" style="left:515.50px;top:398.00px;width:68.00px;height:18.50px;background:#ebeae9;"></div>
<div class="a" style="left:515.50px;top:416.50px;width:68.00px;height:18.00px;background:#ebeae9;"></div>
<div class="a" style="left:515.50px;top:434.50px;width:68.00px;height:19.00px;background:#ebeae9;"></div>
<div class="a" style="left:108.00px;top:471.50px;width:476.00px;height:18.00px;background:linear-gradient(#3a5cab,#1a2580);"></div>
<svg class="a" style="left:0;top:0" width="1080" height="675" viewBox="0 0 1080 675"><line x1="108.5" y1="306.50" x2="583.5" y2="306.50" stroke="#a0a5cc" stroke-width="1"></line><line x1="108.5" y1="324.50" x2="583.5" y2="324.50" stroke="#a0a5cc" stroke-width="1"></line><line x1="108.5" y1="342.50" x2="583.5" y2="342.50" stroke="#a0a5cc" stroke-width="1"></line><line x1="108.5" y1="361.50" x2="583.5" y2="361.50" stroke="#a0a5cc" stroke-width="1"></line><line x1="108.5" y1="379.50" x2="583.5" y2="379.50" stroke="#a0a5cc" stroke-width="1"></line><line x1="108.5" y1="397.50" x2="583.5" y2="397.50" stroke="#a0a5cc" stroke-width="1"></line><line x1="108.5" y1="416.50" x2="583.5" y2="416.50" stroke="#a0a5cc" stroke-width="1"></line><line x1="108.5" y1="434.50" x2="583.5" y2="434.50" stroke="#a0a5cc" stroke-width="1"></line><line x1="108.5" y1="453.50" x2="583.5" y2="453.50" stroke="#a0a5cc" stroke-width="1"></line><line x1="108.5" y1="306.00" x2="108.5" y2="342.00" stroke="#a0a5cc" stroke-width="1"></line><line x1="583.5" y1="306.00" x2="583.5" y2="342.00" stroke="#a0a5cc" stroke-width="1"></line><line x1="108.5" y1="361.00" x2="108.5" y2="489.50" stroke="#a0a5cc" stroke-width="1"></line><line x1="583.5" y1="361.00" x2="583.5" y2="471.00" stroke="#a0a5cc" stroke-width="1"></line><line x1="515.5" y1="306.00" x2="515.5" y2="342.00" stroke="#b4b8d4" stroke-width="0.8" stroke-dasharray="1.2 1.2"></line><line x1="515.5" y1="361.00" x2="515.5" y2="489.50" stroke="#b4b8d4" stroke-width="0.8" stroke-dasharray="1.2 1.2"></line></svg>
<div class="t" style="left: 162.2px; top: 291.43px; font-size: 12.6px; -webkit-text-stroke: 0.25px; color: rgb(31, 43, 128); --w: 368.30px; font-weight: bold; transform: scaleX(0.9729); transform-origin: 0px 0px;">Fill in the following fields to calculate your suggested hour rate</div>
<div class="t" style="left: 152.7px; top: 347.33px; font-size: 12.6px; -webkit-text-stroke: 0.25px; color: rgb(31, 43, 128); --w: 387.20px; font-weight: bold; transform: scaleX(0.9916); transform-origin: 0px 0px;">Score the following questions from 0 to 10 to determine your rate</div>
<div class="t" style="left: 111.3px; top: 309.73px; font-size: 12.6px; -webkit-text-stroke: 0.25px; color: rgb(38, 38, 38); --w: 299.20px; transform: scaleX(1.066); transform-origin: 0px 0px;">Enter the hourly minimum rate for your unique skill</div>
<div class="t" style="left: 111.3px; top: 328.13px; font-size: 12.6px; -webkit-text-stroke: 0.25px; color: rgb(38, 38, 38); --w: 306.40px; transform: scaleX(1.0548); transform-origin: 0px 0px;">Enter the hourly maximum rates for your unique skill</div>
<div class="t" style="left: 111.3px; top: 365.33px; font-size: 12.6px; -webkit-text-stroke: 0.25px; color: rgb(38, 38, 38); --w: 329.50px; transform: scaleX(1.0301); transform-origin: 0px 0px;">Experience Performing Your Skills (10 - extremely skilled)</div>
<div class="t" style="left: 111.3px; top: 383.53px; font-size: 12.6px; -webkit-text-stroke: 0.25px; color: rgb(38, 38, 38); --w: 361.70px; transform: scaleX(1.0201); transform-origin: 0px 0px;">Demand For Your Skills (0 = No Demand 10 Very high demand)</div>
<div class="t" style="left: 111.3px; top: 402.03px; font-size: 12.6px; -webkit-text-stroke: 0.25px; color: rgb(38, 38, 38); --w: 353.70px; transform: scaleX(1.0239); transform-origin: 0px 0px;">Limited Supply Of Skilled Freelancers (10 = Almost no supply)</div>
<div class="t" style="left: 111.3px; top: 420.33px; font-size: 12.6px; -webkit-text-stroke: 0.25px; color: rgb(38, 38, 38); --w: 353.50px; transform: scaleX(1.0243); transform-origin: 0px 0px;">Uniqueness Of Your Skills (0 = Not Unique, 10 = Very Unique)</div>
<div class="t" style="left: 111.3px; top: 438.73px; font-size: 12.6px; -webkit-text-stroke: 0.25px; color: rgb(38, 38, 38); --w: 381.70px; transform: scaleX(1.0287); transform-origin: 0px 0px;">Value Provided By Your Skills (0 = Little Value, 10 = Very Valuable)</div>
<div class="t" style="left: 111.3px; top: 457.13px; font-size: 12.6px; -webkit-text-stroke: 0.25px; color: rgb(38, 38, 38); --w: 77.90px; transform: scaleX(1.0025); transform-origin: 0px 0px;">Total Score %</div>
<div class="t" style="left: 111.4px; top: 474.83px; font-size: 12.6px; -webkit-text-stroke: 0.25px; color: rgb(244, 244, 244); --w: 89.60px; font-weight: bold; transform: scaleX(0.9413); transform-origin: 0px 0px;">Suggested Rate</div>
<div class="t" style="left: 518px; top: 365.33px; font-size: 12.6px; -webkit-text-stroke: 0.25px; color: rgb(38, 38, 38); --w: 6.60px; transform: scaleX(0.9408); transform-origin: 0px 0px;">5</div>
<div class="t" style="left: 518px; top: 383.53px; font-size: 12.6px; -webkit-text-stroke: 0.25px; color: rgb(38, 38, 38); --w: 6.60px; transform: scaleX(0.9408); transform-origin: 0px 0px;">8</div>
<div class="t" style="left: 518px; top: 402.03px; font-size: 12.6px; -webkit-text-stroke: 0.25px; color: rgb(38, 38, 38); --w: 6.60px; transform: scaleX(0.9408); transform-origin: 0px 0px;">5</div>
<div class="t" style="left: 518px; top: 420.33px; font-size: 12.6px; -webkit-text-stroke: 0.25px; color: rgb(38, 38, 38); --w: 6.60px; transform: scaleX(0.9408); transform-origin: 0px 0px;">4</div>
<div class="t" style="left: 518px; top: 438.73px; font-size: 12.6px; -webkit-text-stroke: 0.25px; color: rgb(38, 38, 38); --w: 6.60px; transform: scaleX(0.9408); transform-origin: 0px 0px;">7</div>
<div class="t" style="left: 522px; top: 309.73px; font-size: 12.6px; -webkit-text-stroke: 0.25px; color: rgb(38, 38, 38); --w: 6.70px; transform: scaleX(0.955); transform-origin: 0px 0px;">$</div>
<div class="t" style="left: 552px; top: 309.73px; font-size: 12.6px; -webkit-text-stroke: 0.25px; color: rgb(38, 38, 38); --w: 24.50px; transform: scaleX(0.9994); transform-origin: 0px 0px;">7.00</div>
<div class="t" style="left: 522px; top: 328.13px; font-size: 12.6px; -webkit-text-stroke: 0.25px; color: rgb(38, 38, 38); --w: 6.70px; transform: scaleX(0.955); transform-origin: 0px 0px;">$</div>
<div class="t" style="left: 545px; top: 328.13px; font-size: 12.6px; -webkit-text-stroke: 0.25px; color: rgb(38, 38, 38); --w: 31.50px; transform: scaleX(0.9995); transform-origin: 0px 0px;">75.00</div>
<div class="t" style="left:540px;width:41.5px;text-align:right;top:457.13px;font-size:12.6px;-webkit-text-stroke:0.25px;color:#262626">58%</div>
<div class="t" style="left: 522px; top: 474.83px; font-size: 12.6px; -webkit-text-stroke: 0.25px; color: rgb(244, 244, 244); --w: 6.90px; font-weight: bold; transform: scaleX(0.9835); transform-origin: 0px 0px;">$</div>
<div class="t" style="left: 546px; top: 474.83px; font-size: 12.6px; -webkit-text-stroke: 0.25px; color: rgb(244, 244, 244); --w: 30.50px; font-weight: bold; transform: scaleX(0.9678); transform-origin: 0px 0px;">46.44</div>
<div class="a" style="left:617.20px;top:469.50px;width:63.40px;height:16.30px;background:#3c63ae;box-shadow:1px 1px 2px rgba(0,0,0,.15)"></div>
<div class="a" style="left:703.30px;top:376.50px;width:64.00px;height:109.30px;background:#b1c2e9;box-shadow:1px 1px 2px rgba(0,0,0,.12)"></div>
<div class="a" style="left:790.00px;top:309.80px;width:63.00px;height:176.00px;background:#4a78cd;box-shadow:1px 1px 2px rgba(0,0,0,.15)"></div>
<div class="t" style="left: 624.6px; top: 437.03px; font-size: 10.6px; color: rgb(34, 48, 138); --w: 48.00px; font-weight: bold; transform: scaleX(0.9594); transform-origin: 0px 0px;">Min. Rate,</div>
<div class="t" style="left: 635.1px; top: 451.33px; font-size: 10.6px; color: rgb(34, 48, 138); --w: 27.00px; font-weight: bold; transform: scaleX(1.0183); transform-origin: 0px 0px;">$7.00</div>
<div class="t" style="left: 723.3px; top: 331.03px; font-size: 10.6px; color: rgb(34, 48, 138); --w: 23.00px; font-weight: bold; transform: scaleX(0.7813); transform-origin: 0px 0px;">Sugg.</div>
<div class="t" style="left: 723.8px; top: 345.03px; font-size: 10.6px; color: rgb(34, 48, 138); --w: 22.00px; font-weight: bold; transform: scaleX(0.8492); transform-origin: 0px 0px;">Rate,</div>
<div class="t" style="left: 718.3px; top: 359.03px; font-size: 10.6px; color: rgb(34, 48, 138); --w: 33.00px; font-weight: bold; transform: scaleX(1.0183); transform-origin: 0px 0px;">$46.44</div>
<div class="t" style="left: 795.5px; top: 298.03px; font-size: 10.6px; color: rgb(34, 48, 138); --w: 51.00px; font-weight: bold; transform: scaleX(0.9732); transform-origin: 0px 0px;">Max. Rate,</div>
<div class="t" style="left: 804.5px; top: 312.03px; font-size: 10.6px; color: rgb(34, 48, 138); --w: 33.00px; font-weight: bold; transform: scaleX(1.0183); transform-origin: 0px 0px;">$75.00</div>
<div class="a" style="left:879.20px;top:289.20px;width:98.80px;height:199.00px;background:#98abde;"></div>
<div class="a" style="left:980.00px;top:289.20px;width:85.00px;height:199.00px;background:#35589c;"></div>
<div class="t" style="left: 883.5px; top: 472.83px; font-size: 10.6px; color: rgb(238, 241, 250); --w: 51.00px; transform: scaleX(0.984); transform-origin: 0px 0px;">Demand, 8</div>
<div class="t" style="left: 984px; top: 472.83px; font-size: 10.6px; color: rgb(238, 241, 250); --w: 38.00px; transform: scaleX(0.9975); transform-origin: 0px 0px;">Value, 7</div>
<div class="a" style="left:1065.00px;top:151.00px;width:15.00px;height:488.00px;background:#e8e8e8;"></div>
<svg class="a" style="left:1060px;top:150px" width="20" height="500" viewBox="1060 150 20 500"><path d="M1069.8 165.7l3.1-5.1l3.1 5.1z" fill="#777"></path><rect x="1070" y="169.8" width="6.3" height="440.5" rx="3.1" fill="#7b7b7b"></rect><path d="M1069.8 631.3l3.1 5.1l3.1-5.1z" fill="#777"></path></svg>
<svg class="a" style="left:40px;top:178px" width="72" height="72" viewBox="-36 -36 72 72">
<defs><linearGradient id="sky" x1="0" y1="0" x2="1" y2="0.4"><stop offset="0" stop-color="#fdc62e"></stop><stop offset="1" stop-color="#f28a1e"></stop></linearGradient>
<path id="arcT" d="M-27.2 5A27.2 27.2 0 0 1 27.2 5"></path><path id="arcB" d="M-21 22A30 30 0 0 0 21 22"></path>
<clipPath id="inner"><circle r="21.5"></circle></clipPath></defs>
<circle r="34" fill="#1b2a88"></circle>
<circle r="33.2" fill="none" stroke="#2f86d8" stroke-width="1.5"></circle>
<circle r="22.3" fill="none" stroke="#dfe8f8" stroke-width="1.1"></circle>
<g clip-path="url(#inner)">
<rect x="-24" y="-24" width="48" height="48" fill="url(#sky)"></rect>
<circle cx="-16" cy="-6" r="3.2" fill="#fff6d8"></circle>
<rect x="-24" y="-0.5" width="48" height="6.5" fill="#5fb4e0"></rect>
<rect x="-24" y="6" width="48" height="20" fill="#c9a97c"></rect>
<path d="M-24 15h48v10h-48z" fill="#1b2a88"></path>
<path d="M-14 16l2-4h4M8 16l2-4h4" stroke="#1b2a88" stroke-width="1.2" fill="none"></path>
<path d="M1 -4l4 1l9 17h-4z" fill="#1b2a88"></path>
<path d="M4 3l12 -1l6 5l-12 1z" fill="#243590"></path>
<path d="M3 -6q3 4 6 12l-6 3" fill="#1b2a88"></path>
<circle cx="4.8" cy="-8.3" r="2.6" fill="#1b2a88"></circle>
<path d="M-16 6l6-2.5l5 3l4-1" stroke="#f28ac0" stroke-width="1.6" fill="none"></path>
<path d="M-11.5 -3.5l9.5-0.8l0.6 7.8l-9.5 0.6z" fill="#f6f8ff" stroke="#c8d0e8" stroke-width="0.5"></path>
<ellipse cx="-6.8" cy="0" rx="2.8" ry="1.4" fill="#6a88c8"></ellipse>
<path d="M13 -2q-1-6 1-10M14 -12q-4-1-6 1.5M14 -12q4-1.5 6 1M14 -12q-3 1-4 4M14 -12q3 0.5 4 3.5" stroke="#1b2a88" stroke-width="1" fill="none"></path>
<path d="M-9 -13l1.2-0.8l1.2 0.8M-4 -15l1-0.7l1 0.7M-13 -11l1-0.6l1 0.6" stroke="#1b2a88" stroke-width="0.6" fill="none"></path>
</g>
<text font-family="Liberation Sans" font-weight="bold" font-size="8.2" fill="#f2f2f2"><textPath href="#arcT" startOffset="50%" text-anchor="middle" textLength="82" lengthAdjust="spacingAndGlyphs">GLOBAL FREELANCERS</textPath></text>
<text font-family="Liberation Sans" font-weight="bold" font-size="7.8" fill="#f2f2f2"><textPath href="#arcB" startOffset="50%" text-anchor="middle" textLength="32" lengthAdjust="spacingAndGlyphs">ACADEMY</textPath></text>
<path d="M-27.5 8q1.5 9 9 15.5" stroke="#3f95dc" stroke-width="3" fill="none" stroke-dasharray="1 0.8"></path>
<path d="M27.5 8q-1.5 9-9 15.5" stroke="#3f95dc" stroke-width="3" fill="none" stroke-dasharray="1 0.8"></path>
<path d="M-29.5 1l1.6-1.6l1.6 1.6l-1.6 1.6z M26.3 1l1.6-1.6l1.6 1.6l-1.6 1.6z" fill="#e6ecf8"></path>
</svg>
<svg class="a" style="left:648px;top:358px" width="20" height="26" viewBox="648 358 20 26"><path d="M651.2 361.5v19l4.5-4.3l3.2 6.2l2.6-1.3l-3.1-6h6.2z" fill="#fdfdfd" stroke="#222" stroke-width="1" stroke-linejoin="round"></path></svg>
<div class="a" style="left:0.00px;top:639.00px;width:1080.00px;height:24.00px;background:#e8e8e8;"></div>
<div class="a" style="left:81.00px;top:641.00px;width:83.00px;height:20.00px;background:#ededed;border-radius:4px"></div>
<div class="t" style="left: 87.5px; top: 645.23px; font-size: 10.6px; color: rgb(51, 51, 51); --w: 71.50px; font-weight: bold; transform: scaleX(0.92); transform-origin: 0px 0px;">Rate Calculator</div>
<div class="a" style="left:87.00px;top:655.60px;width:72.00px;height:2.40px;background:#2a9457;border-radius:1.2px"></div>
<div class="t" style="left: 179px; top: 646.03px; font-size: 10.6px; color: rgb(58, 58, 58); --w: 73.50px; transform: scaleX(0.9701); transform-origin: 0px 0px;">Income By Type</div>
<div class="a" style="left:263.50px;top:644.00px;width:1.00px;height:14.00px;background:#cfcfcf;"></div>
<div class="a" style="left:0.00px;top:663.00px;width:1080.00px;height:12.00px;background:#e8e8e8;border-top:1px solid #d4d4d4"></div>
<div class="t" style="left: 8.5px; top: 669.06px; font-size: 8.2px; color: rgb(102, 102, 102); --w: 20.50px; transform: scaleX(0.866); transform-origin: 0px 0px;">Ready</div>
<div class="t" style="left: 82.5px; top: 669.06px; font-size: 8.2px; color: rgb(51, 51, 51); --w: 89.50px; font-weight: bold; transform: scaleX(0.9147); transform-origin: 0px 0px;">Accessibility: Investigate</div>
<div class="t" style="left: 1055px; top: 669.06px; font-size: 8.2px; color: rgb(102, 102, 102); --w: 18.50px; transform: scaleX(0.8829); transform-origin: 0px 0px;">130%</div>
<svg class="a" style="left:0;top:636px" width="1080" height="39" viewBox="0 636 1080 39"><path d="M19 646.5l-3 3.5l3 3.5" fill="none" stroke="#b8b8b8" stroke-width="1"></path><path d="M40.5 646.5l3 3.5l-3 3.5" fill="none" stroke="#9a9a9a" stroke-width="1"></path><path d="M299 645v10M294 650h10" stroke="#555" stroke-width="1"></path><circle cx="651" cy="646.5" r="0.9" fill="#555"></circle><circle cx="651" cy="650" r="0.9" fill="#555"></circle><circle cx="651" cy="653.5" r="0.9" fill="#555"></circle><path d="M666.5 646.8v6.4l-4 -3.2z" fill="#777"></path><rect x="676.5" y="647.3" width="244.5" height="5.8" rx="2.9" fill="#7b7b7b"></rect><path d="M1058.5 646.8v6.4l4 -3.2z" fill="#777"></path><rect x="44.5" y="666.5" width="9" height="9" fill="none" stroke="#666" stroke-width="0.9"></rect><circle cx="49" cy="671" r="2" fill="none" stroke="#666"></circle><path d="M72 666v3M68.5 667.5l3.5 2l3.5-2M72 669.5v5" stroke="#555" fill="none" stroke-width="0.9"></path><rect x="858" y="663.5" width="28" height="12" fill="#dddddd"></rect><path d="M866.5 666.5h10v9h-10zM866.5 669.5h10M866.5 672.5h10M869.8 666.5v9M873.2 666.5v9" stroke="#444" fill="none" stroke-width="0.8"></path><path d="M896.5 666.5h10v9h-10zM899 668.5h5v5h-5z" stroke="#555" fill="none" stroke-width="0.8"></path><path d="M926.5 666.5h10v9h-10zM930 666.5v5h3v-5" stroke="#555" fill="none" stroke-width="0.8"></path><path d="M951.5 670.5h5M961 670.5h74M1042 667.5v6M1039 670.5h6" stroke="#777" fill="none" stroke-width="0.8"></path><rect x="1000.5" y="667" width="3" height="8" fill="#555"></rect></svg>
<!--/CONTENT-->

</body></html>
